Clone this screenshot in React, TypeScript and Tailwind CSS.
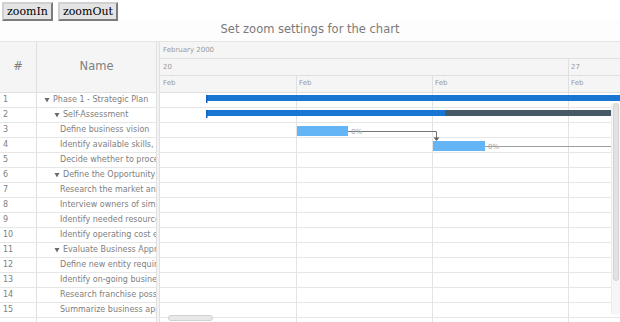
type Row = { id: number; name: string; level: number; group?: boolean };

const rows: Row[] = [
  { id: 1, name: "Phase 1 - Strategic Plan", level: 0, group: true },
  { id: 2, name: "Self-Assessment", level: 1, group: true },
  { id: 3, name: "Define business vision", level: 2 },
  { id: 4, name: "Identify available skills, information and support", level: 2 },
  { id: 5, name: "Decide whether to proceed", level: 2 },
  { id: 6, name: "Define the Opportunity", level: 1, group: true },
  { id: 7, name: "Research the market and competition", level: 2 },
  { id: 8, name: "Interview owners of similar businesses", level: 2 },
  { id: 9, name: "Identify needed resources", level: 2 },
  { id: 10, name: "Identify operating cost elements", level: 2 },
  { id: 11, name: "Evaluate Business Approach", level: 1, group: true },
  { id: 12, name: "Define new entity requirements", level: 2 },
  { id: 13, name: "Identify on-going business purchase opportunities", level: 2 },
  { id: 14, name: "Research franchise possibilities", level: 2 },
  { id: 15, name: "Summarize business approach", level: 2 },
];

const Caret = () => (
  <svg width="6" height="6" viewBox="0 0 6 6" className="shrink-0">
    <path d="M0.5 1 L5.5 1 L3 5.5 Z" fill="#6b6b6b" />
  </svg>
);

const NameCell = ({ row }: { row: Row }) => {
  // indentation matches the tree levels in the grid
  if (row.group) {
    const pad = row.level === 0 ? "pl-[7px]" : "pl-[17px]";
    return (
      <div className={`flex items-center gap-[3px] ${pad}`}>
        <Caret />
        <span className="whitespace-nowrap">{row.name}</span>
      </div>
    );
  }
  return <div className="pl-[23px] whitespace-nowrap">{row.name}</div>;
};

const Timeline = () => (
  <svg width="460" height="240" className="absolute left-0 top-0">
    <rect x="46" y="2" width="420" height="6" fill="#1976d2" />
    <rect x="46" y="2" width="1.5" height="8" fill="#1565c0" />
    <rect x="46" y="17" width="239" height="6" fill="#1976d2" />
    <rect x="285" y="17" width="175" height="6" fill="#455a64" />
    <rect x="46" y="17" width="1.5" height="8" fill="#1565c0" />

    <path d="M188 38.5 H276.5 V45" stroke="#757575" strokeWidth="1" fill="none" />
    <path d="M273.5 44.5 L279.5 44.5 L276.5 48 Z" fill="#616161" />
    <rect x="137" y="33" width="51" height="10" fill="#64b5f6" />
    <text x="191" y="41" fontSize="7" fill="#a3a3a3" fontFamily="DejaVu Sans">0%</text>

    <path d="M325 53.5 H460" stroke="#9e9e9e" strokeWidth="1" fill="none" />
    <rect x="273" y="48" width="52" height="10" fill="#64b5f6" />
    <text x="328" y="56" fontSize="7" fill="#a3a3a3" fontFamily="DejaVu Sans">0%</text>
  </svg>
);

export default function App() {
  return (
    <div className="w-[620px] h-[322px] overflow-hidden bg-white font-['DejaVu_Sans',sans-serif]">
      <div className="flex gap-[5px] pl-[2px] pt-[2px] h-[20px]">
        <button className="h-[19px] px-[3px] bg-[#e4e4e4] border-2 [border-style:outset] border-[#d0d0d0] text-[11px] leading-[13px] text-black font-['DejaVu_Serif',serif]">
          zoomIn
        </button>
        <button className="h-[19px] px-[3px] bg-[#e4e4e4] border-2 [border-style:outset] border-[#d0d0d0] text-[11px] leading-[13px] text-black font-['DejaVu_Serif',serif]">
          zoomOut
        </button>
      </div>

      <div className="h-[21px] pt-[1px] text-center text-[11.5px] leading-[16px] text-[#7a7a7a] bg-[#fdfdfd]">
        Set zoom settings for the chart
      </div>

      <div className="flex h-[281px] border-t border-[#e4e4e4]">
        {/* data grid */}
        <div className="w-[156px] shrink-0 overflow-hidden">
          <div className="flex h-[51px] bg-[#f5f5f5] border-b border-[#e0e0e0] text-[11.5px] text-[#808080]">
            <div className="w-[37px] flex items-center justify-center border-r border-[#e0e0e0]">#</div>
            <div className="flex-1 flex items-center justify-center">Name</div>
          </div>
          {rows.map((r) => (
            <div key={r.id} className="flex h-[15px] border-b border-[#e6e6e6] text-[8px] leading-[14px] text-[#808080]">
              <div className="w-[37px] shrink-0 pl-[3px] border-r border-[#e0e0e0]">{r.id}</div>
              <div className="flex-1 overflow-hidden">
                <NameCell row={r} />
              </div>
            </div>
          ))}
          <div className="flex h-[15px]">
            <div className="w-[37px] shrink-0 border-r border-[#e0e0e0]" />
          </div>
        </div>

        {/* splitter */}
        <div className="w-[4px] shrink-0 bg-[#f3f3f3] border-x border-[#e0e0e0]" />

        {/* timeline */}
        <div className="flex-1 relative overflow-hidden">
          <div className="h-[51px] bg-[#f5f5f5] border-b border-[#e0e0e0] text-[7px] text-[#9a9a9a]">
            <div className="h-[17px] border-b border-[#e0e0e0] pl-[3px] leading-[17px]">February 2000</div>
            <div className="flex h-[17px] border-b border-[#e0e0e0] leading-[16px]">
              <div className="w-[409px] shrink-0 pl-[3px] border-r border-[#e0e0e0]">20</div>
              <div className="pl-[2px]">27</div>
            </div>
            <div className="flex h-[16px] leading-[15px]">
              <div className="w-[137px] shrink-0 pl-[3px] border-r border-[#e0e0e0]">Feb</div>
              <div className="w-[136px] shrink-0 pl-[2px] border-r border-[#e0e0e0]">Feb</div>
              <div className="w-[136px] shrink-0 pl-[2px] border-r border-[#e0e0e0]">Feb</div>
              <div className="pl-[2px]">Feb</div>
            </div>
          </div>

          <div className="relative">
            {[...rows, { id: 16, name: "", level: 0 }].map((r) => (
              <div key={r.id} className="flex h-[15px] border-b border-[#e6e6e6]">
                <div className="w-[137px] shrink-0 border-r border-[#e3e3e3]" />
                <div className="w-[136px] shrink-0 border-r border-[#e3e3e3]" />
                <div className="w-[136px] shrink-0 border-r border-[#e3e3e3]" />
              </div>
            ))}
            <Timeline />

            {/* vertical scrollbar */}
            <div className="absolute right-0 top-[10px] w-[9px] h-[212px] bg-[#f6f6f6] rounded-[4px] border-l border-[#ececec]">
              <div className="h-[178px] mx-[1px] bg-[#e2e2e2] rounded-[4px] border border-[#d4d4d4]" />
            </div>
            {/* horizontal scrollbar */}
            <div className="absolute left-[8px] top-[222px] w-[45px] h-[6px] bg-[#e8e8e8] rounded-[4px] border border-[#d0d0d0]" />
          </div>
        </div>
      </div>
    </div>
  );
}
